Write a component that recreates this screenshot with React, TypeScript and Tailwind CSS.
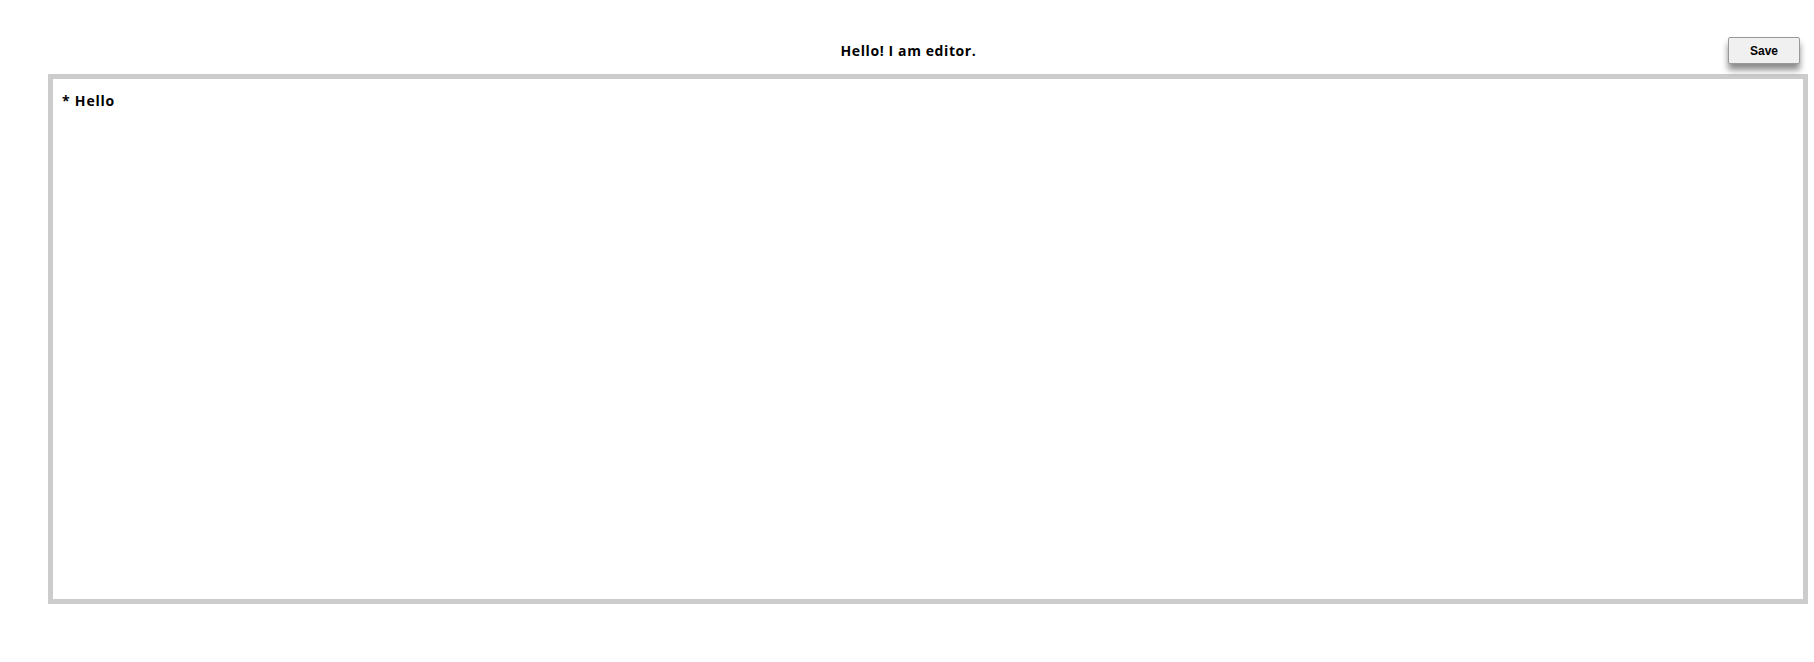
export default function App() {
  return (
    <div className="min-h-screen bg-white pt-[37px]" style={{ fontFamily: '"Open Sans", sans-serif' }}>
      {/* Header */}
      <div className="grid h-[27px] grid-cols-[1fr_auto_1fr] items-center">
        <div />
        <h1 className="pl-[3px] text-[14px] font-bold leading-none tracking-[0.6px] text-black">Hello! I am editor.</h1>
        <div className="flex justify-end pr-[14px]">
          <button className="h-[27px] w-[72px] rounded-[2px] border border-[#999] bg-[#f0f0f0] text-[12px] font-bold text-black shadow-[0_6px_6px_rgba(0,0,0,0.45)] [font-family:'Liberation_Sans',sans-serif]">
            Save
          </button>
        </div>
      </div>

      {/* Editor */}
      <div className="ml-[48px] mt-[10px] h-[530px] w-[1760px] border-[5px] border-[#cccccc] bg-white px-[9px] py-[11px]">
        <p className="text-[14px] font-bold tracking-[0.8px] text-black">* Hello</p>
      </div>
    </div>
  );
}
